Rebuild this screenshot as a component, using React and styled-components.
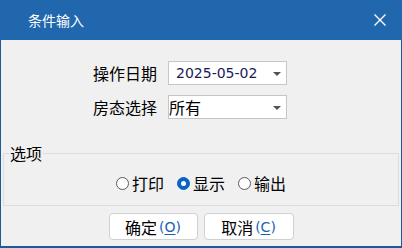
import React, { useState } from 'react'
import styled, { createGlobalStyle } from 'styled-components'

const GlobalStyle = createGlobalStyle`
    html, body {
        margin: 0;
        padding: 0;
        background: #f0f0f0;
    }
    body {
        font-family: "Noto Sans CJK SC", "Noto Sans", sans-serif;
    }
`

const Window = styled.div`
    width: 402px;
    height: 248px;
    box-sizing: border-box;
    display: flex;
    flex-direction: column;
    background: #f0f0f0;
    border: 1px solid #1b5a9b;
    border-top: none;
    border-bottom-width: 2px;
`

const TitleBar = styled.div`
    height: 40px;
    flex: none;
    display: flex;
    align-items: center;
    justify-content: space-between;
    background: #2167ae;
    margin: 0 -1px;
    padding: 0 15px 0 28px;
    color: #fff;
    font-size: 14px;
`

const CloseButton = styled.button`
    width: 14px;
    height: 14px;
    padding: 0;
    border: none;
    background: none;
    display: flex;
    svg { display: block; }
`

const Form = styled.div`
    display: grid;
    grid-template-columns: 64px 119px;
    column-gap: 11px;
    row-gap: 10px;
    align-items: center;
    margin: 21px 22px 0 0;
    align-self: center;
`

const Label = styled.span`
    font-size: 16px;
    line-height: 24px;
    color: #000;
`

const Combo = styled.div`
    height: 24px;
    box-sizing: border-box;
    border: 1px solid #c6c6c6;
    background: #fff;
    display: flex;
    align-items: center;
    justify-content: space-between;
    padding: 0 5px 0 ${(p) => p.$pad}px;
    font-size: ${(p) => (p.$mono ? 14 : 16)}px;
    font-family: ${(p) => (p.$mono ? '"DejaVu Sans", sans-serif' : '"Noto Sans CJK SC", sans-serif')};
    color: ${(p) => (p.$mono ? '#1a1a5a' : '#000')};
`

const Arrow = styled.span`
    width: 0;
    height: 0;
    border-left: 4px solid transparent;
    border-right: 4px solid transparent;
    border-top: 4px solid #4a5750;
    margin-top: 1px;
`

const Group = styled.fieldset`
    margin: 26px 2px 0 2px;
    padding: 0 0 10px 0;
    border: 1px solid #dcdcdc;
    display: flex;
    justify-content: center;
    gap: 13px;
`

const Legend = styled.legend`
    margin-left: 5px;
    padding: 0 1px;
    font-size: 16px;
    line-height: 16px;
    color: #000;
`

const RadioItem = styled.label`
    display: flex;
    align-items: center;
    gap: 3px;
    font-size: 16px;
    line-height: 24px;
    margin-top: 10px;
    cursor: default;
`

const RadioDot = styled.span`
    width: 13px;
    height: 13px;
    box-sizing: border-box;
    border-radius: 50%;
    background: ${(p) => (p.$on ? '#0a64c4' : '#fff')};
    border: 1px solid ${(p) => (p.$on ? '#0a64c4' : '#5a5a5a')};
    display: flex;
    align-items: center;
    justify-content: center;
    &::after {
        content: '';
        width: 5px;
        height: 5px;
        border-radius: 50%;
        background: ${(p) => (p.$on ? '#fff' : 'transparent')};
    }
`

const ButtonRow = styled.div`
    display: flex;
    justify-content: center;
    gap: 6px;
    margin-top: 7px;
`

const Button = styled.button`
    width: ${(p) => p.$w}px;
    height: 27px;
    box-sizing: border-box;
    background: #fff;
    border: 1px solid #d0d0d0;
    border-radius: 4px;
    font-family: "Noto Sans CJK SC", sans-serif;
    font-size: 16px;
    color: #000;
    padding: 0;
    display: flex;
    align-items: center;
    justify-content: center;
`

const Key = styled.span`
    color: #1a5fb4;
    font-family: "DejaVu Sans", sans-serif;
    font-size: 14px;
    margin-left: 2px;
    u { text-underline-offset: 2px; }
`

const options = ['打印', '显示', '输出']

const App = () => {
    const [choice, setChoice] = useState('显示')

    return (
        <>
            <GlobalStyle />
            <Window>
                <TitleBar>
                    <span>条件输入</span>
                    <CloseButton aria-label="关闭">
                        <svg width="14" height="14" viewBox="0 0 14 14">
                            <path d="M1.5 1.5 L12.5 12.5 M12.5 1.5 L1.5 12.5" stroke="#fff" strokeWidth="1.4" />
                        </svg>
                    </CloseButton>
                </TitleBar>
                <Form>
                    <Label>操作日期</Label>
                    <Combo $mono $pad={7}>
                        2025-05-02
                        <Arrow />
                    </Combo>
                    <Label>房态选择</Label>
                    <Combo $pad={0}>
                        所有
                        <Arrow />
                    </Combo>
                </Form>
                <Group>
                    <Legend>选项</Legend>
                    {options.map((o) => (
                        <RadioItem key={o} onClick={() => setChoice(o)}>
                            <RadioDot $on={choice === o} />
                            {o}
                        </RadioItem>
                    ))}
                </Group>
                <ButtonRow>
                    <Button $w={89}>
                        确定<Key>(<u>O</u>)</Key>
                    </Button>
                    <Button $w={90}>
                        取消<Key>(<u>C</u>)</Key>
                    </Button>
                </ButtonRow>
            </Window>
        </>
    )
}

export default App
